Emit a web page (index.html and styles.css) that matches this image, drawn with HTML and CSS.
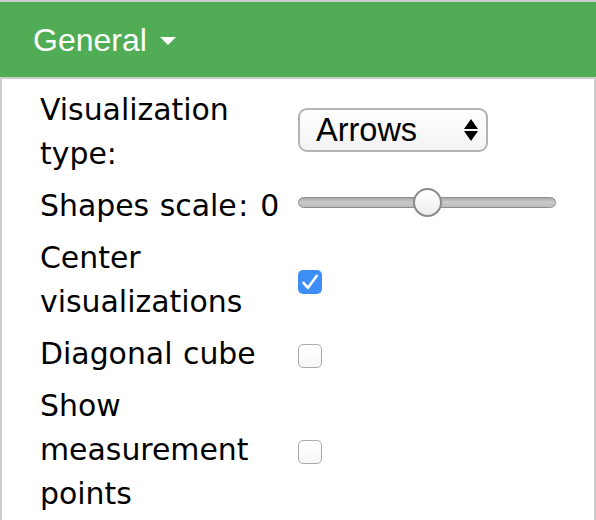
FILE: index.html
```html
<!DOCTYPE html>
<html>
<head>
<meta charset="utf-8">
<link rel="stylesheet" href="styles.css">
</head>
<body>
<div class="panel">
  <div class="header">
    <span class="title">General</span>
    <svg class="caret" width="16" height="8" viewBox="0 0 16 8"><polygon points="0,0 16,0 8,8" fill="#fff"/></svg>
  </div>
  <div class="content">
    <div class="rows">
      <div class="label">Visualization type:</div>
      <div class="control ctl-select">
        <div class="select">
          <span class="select-text">Arrows</span>
          <svg width="14" height="22" viewBox="0 0 14 22"><polygon points="7,0 14,10 0,10" fill="#000"/><polygon points="0,12 14,12 7,22" fill="#000"/></svg>
        </div>
      </div>

      <div class="label nowrap">Shapes scale<span class="colon">:</span> 0</div>
      <div class="control ctl-slider">
        <input class="slider" type="range" min="-10" max="10" value="0">
      </div>

      <div class="label">Center visualizations</div>
      <div class="control ctl-check">
        <span class="cb checked"><svg width="24" height="24" viewBox="0 0 24 24"><path d="M5.5 12.8 L10 17.8 L18.8 5.8" fill="none" stroke="#fff" stroke-width="2.6" stroke-linecap="round" stroke-linejoin="round"/></svg></span>
      </div>

      <div class="label">Diagonal cube</div>
      <div class="control ctl-check">
        <span class="cb"></span>
      </div>

      <div class="label">Show measurement points</div>
      <div class="control ctl-check">
        <span class="cb"></span>
      </div>
    </div>
  </div>
</div>
</body>
</html>
```

FILE: styles.css
```css
html, body {
  margin: 0;
  padding: 0;
}
body {
  background: #cccccc;
  font-family: "DejaVu Sans", Verdana, sans-serif;
  color: #000;
}
.panel {
  padding-top: 2px;
}
.header {
  height: 75px;
  background: #50ad55;
  display: flex;
  align-items: center;
  gap: 13px;
  padding-left: 33px;
  margin-bottom: 2px;
  color: #fff;
  font-family: "Liberation Sans", Arial, sans-serif;
  font-size: 32px;
}
.title {
  line-height: 1;
}
.caret {
  display: block;
  margin-top: 2px;
}
.content {
  background: #fff;
  margin: 0 2px;
  height: calc(100vh - 79px);
  overflow: hidden;
  box-sizing: border-box;
  padding: 9px 0 0 38px;
}
.rows {
  display: grid;
  grid-template-columns: 244px 1fr;
  column-gap: 14px;
  row-gap: 8px;
}
.label {
  font-size: 29.9px;
  line-height: 44px;
  word-spacing: 1px;
}
.nowrap {
  white-space: nowrap;
}
.colon {
  padding: 0 1.5px;
}
.control {
  align-self: center;
  display: flex;
}
.ctl-select {
  margin-bottom: 4px;
}
.ctl-slider {
  margin-bottom: 8px;
}
.ctl-check {
  margin-top: 4px;
}
.select {
  width: 190px;
  height: 44px;
  box-sizing: border-box;
  border: 2px solid #b3b3b3;
  border-radius: 9px;
  background: linear-gradient(#ffffff, #f3f3f3);
  display: flex;
  align-items: center;
  justify-content: space-between;
  padding: 0 8px 0 16px;
  font-family: "Liberation Sans", Arial, sans-serif;
  font-size: 32.5px;
}
.select svg {
  display: block;
}
.slider {
  -webkit-appearance: none;
  appearance: none;
  width: 258px;
  height: 30px;
  margin: 0;
  padding: 0;
  background: transparent;
}
.slider::-webkit-slider-runnable-track {
  height: 11px;
  box-sizing: border-box;
  border: 1px solid #8e8e8e;
  border-radius: 6px;
  background: linear-gradient(#a9a9a9, #cacaca 45%, #bcbcbc);
}
.slider::-webkit-slider-thumb {
  -webkit-appearance: none;
  appearance: none;
  width: 29px;
  height: 29px;
  box-sizing: border-box;
  border-radius: 50%;
  border: 2px solid #8b8b8b;
  background: linear-gradient(#ffffff, #ededed);
  margin-top: -10px;
}
.cb {
  width: 24px;
  height: 24px;
  box-sizing: border-box;
  border-radius: 5px;
  border: 1.5px solid #aaaaaa;
  background: linear-gradient(#ffffff, #f6f6f6);
  display: block;
}
.cb.checked {
  border: none;
  background: #3d8ff7;
}
.cb svg {
  display: block;
}
```
